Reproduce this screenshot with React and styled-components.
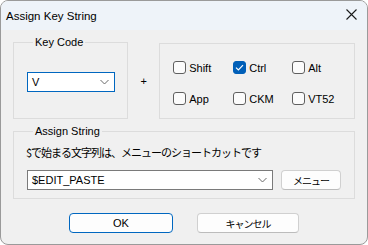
import React from 'react'
import styled, { createGlobalStyle } from 'styled-components'

const GlobalStyle = createGlobalStyle`
  html, body {
    margin: 0;
    padding: 0;
    background: #ffffff;
  }
  body {
    font-family: "Liberation Sans", "Noto Sans CJK JP", sans-serif;
    font-size: 11px;
    color: #000;
  }
`

const Window = styled.div`
  width: 368px;
  height: 245px;
  box-sizing: border-box;
  border: 1px solid #9a9a9a;
  border-radius: 8px;
  background: #f0f0f0;
  overflow: hidden;
  display: flex;
  flex-direction: column;
`

const TitleBar = styled.div`
  height: 29px;
  flex: none;
  display: flex;
  align-items: center;
  justify-content: space-between;
  padding: 0 10px 0 5px;
  background: #eef3f9;
  font-size: 11.5px;
`

const CloseIcon = styled.svg`
  width: 11px;
  height: 11px;
  margin-top: -2px;
`

const Content = styled.div`
  padding: 6px 12px 0 12px;
  display: flex;
  flex-direction: column;
`

const TopRow = styled.div`
  display: flex;
  align-items: stretch;
`

const Group = styled.fieldset`
  margin: 0;
  margin-top: ${p => (p.$offset ? '7px' : '0')};
  padding: ${p => p.$pad};
  width: ${p => p.$width}px;
  box-sizing: border-box;
  min-width: 0;
  border: 1px solid #dcdcdc;
  border-radius: 0;

  legend {
    margin-left: 6px;
    padding: 0 2px;
    font-size: 11px;
    line-height: 13px;
  }
`

const Plus = styled.div`
  width: 31px;
  display: flex;
  align-items: center;
  justify-content: center;
  padding-top: 6px;
  font-size: 11px;
`

const Combo = styled.div`
  width: ${p => p.$width}px;
  height: 20px;
  box-sizing: border-box;
  border: 1px solid ${p => (p.$focused ? '#0067c0' : '#7a7a7a')};
  background: #ffffff;
  display: flex;
  align-items: center;
  justify-content: space-between;
  padding: 0 5px 0 4px;
  font-size: 11px;
`

const Chevron = styled.svg`
  width: 9px;
  height: 6px;
`

const CheckGrid = styled.div`
  display: grid;
  grid-template-columns: 60px 59px auto;
  grid-auto-rows: 13px;
  row-gap: 18px;
`

const CheckItem = styled.label`
  display: flex;
  align-items: center;
  gap: 3px;
  font-size: 11px;
`

const Box = styled.span`
  width: 13px;
  height: 13px;
  box-sizing: border-box;
  border-radius: 3px;
  border: 1px solid ${p => (p.$checked ? '#005fb8' : '#5f5f5f')};
  background: ${p => (p.$checked ? '#005fb8' : '#fbfbfb')};
  display: flex;
  align-items: center;
  justify-content: center;
`

const Hint = styled.div`
  font-family: "Noto Sans CJK JP", sans-serif;
  font-size: 11px;
  letter-spacing: -1px;
  line-height: 14px;
  margin-left: -1px;
`

const StringRow = styled.div`
  display: flex;
  align-items: center;
  gap: 8px;
  margin-top: 11px;
`

const Button = styled.button`
  width: ${p => p.$width}px;
  height: 20px;
  box-sizing: border-box;
  border: 1px solid ${p => (p.$primary ? '#0067c0' : '#d0d0d0')};
  border-bottom-color: ${p => (p.$primary ? '#0067c0' : '#bcbcbc')};
  border-radius: 4px;
  background: #fdfdfd;
  padding: 0;
  font-family: ${p => (p.$jp ? '"Noto Sans CJK JP", sans-serif' : '"Liberation Sans", sans-serif')};
  font-size: ${p => (p.$jp ? '10px' : '11px')};
  letter-spacing: ${p => (p.$jp ? '-1px' : '0')};
  color: #000;
`

const ButtonRow = styled.div`
  display: flex;
  justify-content: center;
  gap: 24px;
  margin-top: 14px;
`

const modifiers = [
  { name: 'Shift', checked: false },
  { name: 'Ctrl', checked: true },
  { name: 'Alt', checked: false },
  { name: 'App', checked: false },
  { name: 'CKM', checked: false },
  { name: 'VT52', checked: false }
]

function DownArrow() {
  return (
    <Chevron viewBox="0 0 9 6">
      <path d="M0.5 1 L4.5 5 L8.5 1" fill="none" stroke="#6a6a6a" strokeWidth="1" />
    </Chevron>
  )
}

export default function App() {
  return (
    <>
      <GlobalStyle />
      <Window>
        <TitleBar>
          <span>Assign Key String</span>
          <CloseIcon viewBox="0 0 11 11">
            <path d="M0.5 0.5 L10.5 10.5 M10.5 0.5 L0.5 10.5" stroke="#1a1a1a" strokeWidth="1.1" />
          </CloseIcon>
        </TitleBar>
        <Content>
          <TopRow>
            <Group $width={116} $pad="0 13px 0 13px">
              <legend>Key Code</legend>
              <div style={{ paddingTop: 23, paddingBottom: 25 }}>
                <Combo $width={88} $focused>
                  <span>V</span>
                  <DownArrow />
                </Combo>
              </div>
            </Group>
            <Plus>+</Plus>
            <Group $width={197} $offset $pad="17px 8px 13px 13px">
              <CheckGrid>
                {modifiers.map(m => (
                  <CheckItem key={m.name}>
                    <Box $checked={m.checked}>
                      {m.checked && (
                        <svg width="9" height="7" viewBox="0 0 9 7">
                          <path d="M1 3.6 L3.4 6 L8 1.2" fill="none" stroke="#fff" strokeWidth="1.2" />
                        </svg>
                      )}
                    </Box>
                    {m.name}
                  </CheckItem>
                ))}
              </CheckGrid>
            </Group>
          </TopRow>
          <Group $width={342} $pad="7px 13px 8px 13px" style={{ marginTop: 6 }}>
            <legend>Assign String</legend>
            <Hint>$で始まる文字列は、メニューのショートカットです</Hint>
            <StringRow>
              <Combo $width={246}>
                <span>$EDIT_PASTE</span>
                <DownArrow />
              </Combo>
              <Button $width={60} $jp>メニュー</Button>
            </StringRow>
          </Group>
          <ButtonRow>
            <Button $width={104} $primary>OK</Button>
            <Button $width={102} $jp>キャンセル</Button>
          </ButtonRow>
        </Content>
      </Window>
    </>
  )
}
